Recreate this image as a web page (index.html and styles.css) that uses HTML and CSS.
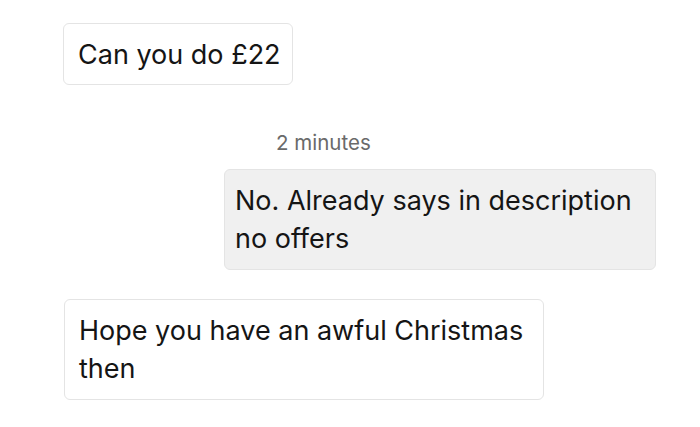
FILE: index.html
```html
<!DOCTYPE html>
<html>
<head>
<meta charset="utf-8">
<link rel="stylesheet" href="styles.css">
</head>
<body>
<div class="chat">
  <div class="msg msg-in msg-first">
    <div class="bubble bubble-short">Can you do £22</div>
  </div>
  <div class="time">2 minutes</div>
  <div class="msg msg-out">
    <div class="bubble bubble-out">No. Already says in description no offers</div>
  </div>
  <div class="msg msg-in msg-last">
    <div class="bubble bubble-long">Hope you have an awful Christmas then</div>
  </div>
</div>
</body>
</html>
```
FILE: styles.css
```css
html, body {
  margin: 0;
  padding: 0;
  background: #ffffff;
}
body {
  width: 700px;
  height: 427px;
  overflow: hidden;
  font-family: Inter, "Noto Sans", sans-serif;
  color: #151515;
}
.chat {
  display: flex;
  flex-direction: column;
  padding: 23px 44px 0 63px;
}
.msg {
  display: flex;
}
.msg-out {
  justify-content: flex-end;
}
.bubble {
  box-sizing: border-box;
  border: 1px solid #e4e4e4;
  border-radius: 6px;
  background: #ffffff;
  font-size: 27px;
  line-height: 38px;
  padding: 12px 10px 10px 14px;
}
.bubble-short {
  width: 230px;
}
.bubble-out {
  width: 432px;
  background: #f0f0f0;
  padding-left: 10px;
  padding-bottom: 11px;
}
.bubble-long {
  width: 480px;
  margin-left: 1px;
  padding-bottom: 11px;
}
.time {
  margin: 46px 0 0 213px;
  font-size: 20.5px;
  line-height: 24px;
  color: #6a6a6a;
}
.msg-out {
  margin-top: 14px;
}
.msg-last {
  margin-top: 29px;
}
```
